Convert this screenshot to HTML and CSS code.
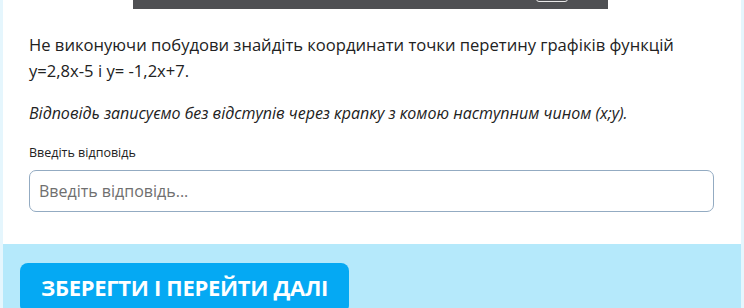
FILE: index.html
```html
<!DOCTYPE html>
<html lang="uk">
<head>
<meta charset="utf-8">
<link rel="stylesheet" href="styles.css">
</head>
<body>
<div class="page">
  <div class="card">
    <div class="topbar"><span class="topbar-btn"></span></div>
    <div class="content">
      <p class="question">Не виконуючи побудови знайдіть координати точки перетину графіків функцій y=2,8x-5 і y= -1,2x+7.</p>
      <p class="hint">Відповідь записуємо без відступів через крапку з комою наступним чином (x;y).</p>
      <label class="label" for="answer">Введіть відповідь</label>
      <input class="answer" id="answer" type="text" placeholder="Введіть відповідь...">
    </div>
    <div class="footer">
      <button class="save">ЗБЕРЕГТИ І ПЕРЕЙТИ ДАЛІ</button>
    </div>
  </div>
</div>
</body>
</html>
```
FILE: styles.css
```css
html, body {
  margin: 0;
  padding: 0;
  height: 100%;
  overflow: hidden;
}
body {
  background: #e5f6fd;
  font-family: "Open Sans", "DejaVu Sans", sans-serif;
  color: #222;
}
.page {
  padding: 0 3px;
}
.card {
  background: #fff;
  min-height: 308px;
  display: flex;
  flex-direction: column;
}
.topbar {
  margin-left: 130px;
  width: 475px;
  height: 9px;
  background: #4f5053;
  position: relative;
}
.topbar-btn {
  position: absolute;
  left: 403px;
  top: -6px;
  width: 30px;
  height: 6px;
  border: 1px solid #e8e8e8;
  border-radius: 3px;
}
.content {
  padding: 23px 27px 32px 26px;
}
.question {
  margin: 0;
  font-size: 16.6px;
  line-height: 26px;
}
.hint {
  margin: 16px 0 0;
  font-size: 16px;
  line-height: 26px;
  font-style: italic;
}
.label {
  display: block;
  margin-top: 18px;
  font-size: 12.5px;
  line-height: 18px;
  color: #222;
}
.answer {
  display: block;
  box-sizing: border-box;
  width: 100%;
  height: 42px;
  margin-top: 8px;
  padding: 0 9px;
  border: 1px solid #93abc2;
  border-radius: 7px;
  font-family: inherit;
  font-size: 16px;
  color: #333;
  background: #fff;
  outline: none;
}
.answer::placeholder {
  color: #6f6f6f;
}
.footer {
  flex: 1;
  background: #b5e9fb;
  padding: 19px 17px 0;
}
.save {
  border: none;
  background: #05a9f3;
  color: #fff;
  border-radius: 8px;
  height: 50px;
  padding: 0 21px;
  font-family: inherit;
  font-size: 22px;
  font-weight: 700;
  letter-spacing: -0.3px;
  display: flex;
  align-items: flex-start;
  padding-top: 9px;
  box-sizing: border-box;
}
```
